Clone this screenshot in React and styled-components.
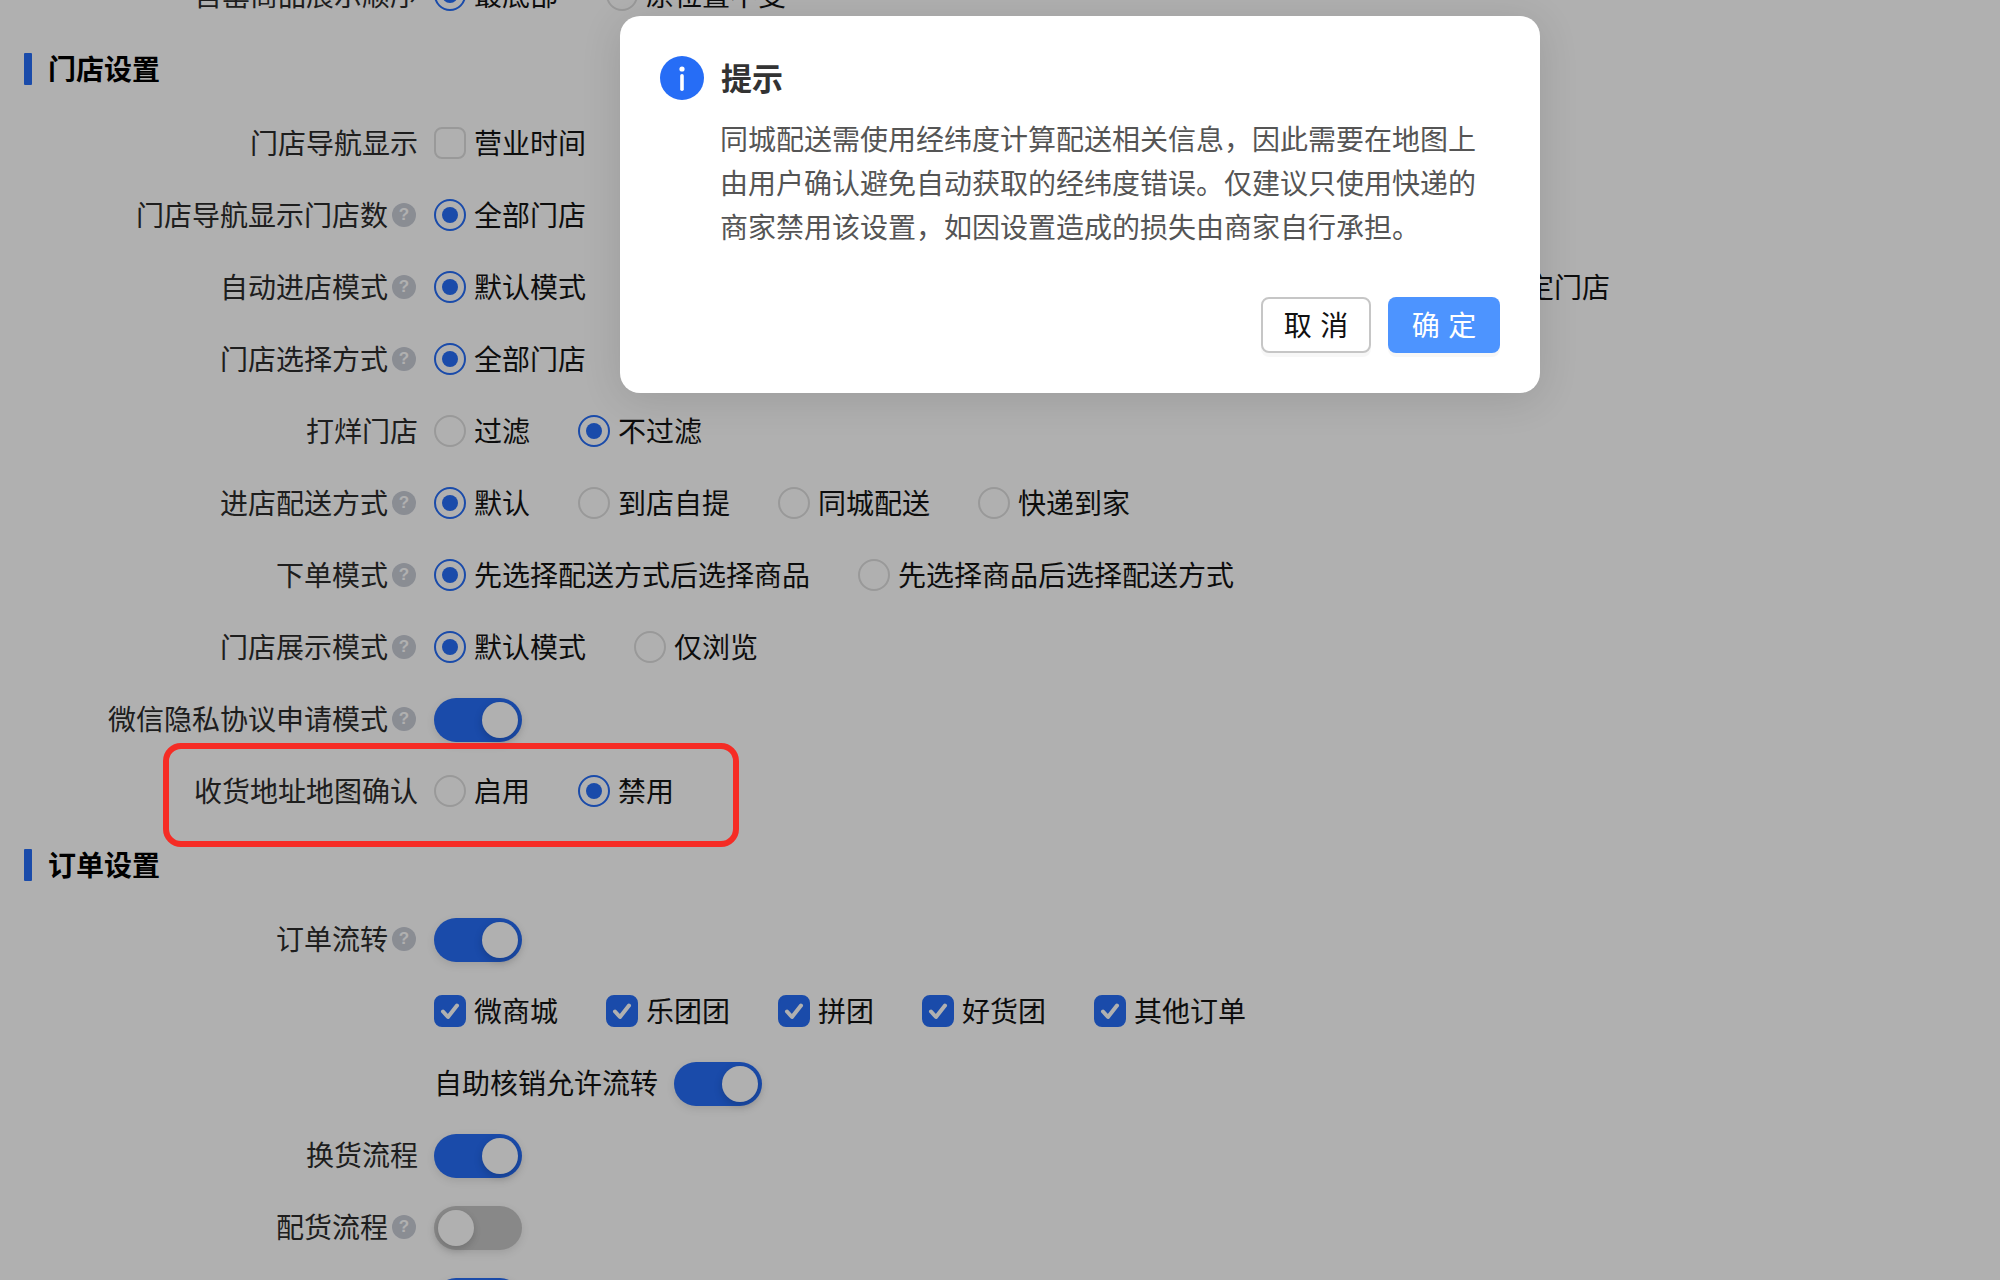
import React from 'react'
import styled, { createGlobalStyle } from 'styled-components'

const GlobalStyle = createGlobalStyle`
  html, body {
    margin: 0;
    padding: 0;
    background: #fff;
  }
  body {
    font-family: "Noto Sans CJK SC", "Noto Sans", sans-serif;
    font-size: 28px;
    color: #1a1a1a;
  }
  * {
    box-sizing: border-box;
  }
`

const BLUE = '#266df6'

const Shell = styled.div`
  position: relative;
  width: 2000px;
  height: 1280px;
  overflow: hidden;
  background: #fff;
`

// the settings page is scrolled, so the first row starts above the fold
const Page = styled.div`
  margin-top: -41px;
  display: flex;
  flex-direction: column;
`

const SectionTitle = styled.div`
  height: 76px;
  padding-left: 24px;
  display: flex;
  align-items: center;
  gap: 16px;
  font-size: 28px;
  font-weight: 700;
  line-height: 32px;
  color: #000;
  &::before {
    content: '';
    width: 8px;
    height: 32px;
    border-radius: 1px;
    background: ${BLUE};
  }
`

const TitleText = styled.span`
  padding-bottom: 2px;
`

const Row = styled.div`
  height: 72px;
  display: flex;
  align-items: center;
  gap: 16px;
`

const Label = styled.div`
  width: 418px;
  flex: none;
  display: flex;
  justify-content: flex-end;
  align-items: center;
  color: #2c2c2c;
  line-height: 40px;
  white-space: nowrap;
`

const Text = styled.span`
  padding-bottom: 2px;
`

const Help = styled.span`
  width: 24px;
  height: 24px;
  margin: 0 2px 0 4px;
  flex: none;
  border-radius: 50%;
  background: #c8ccd6;
  color: #fff;
  font-family: "Liberation Sans", sans-serif;
  font-size: 17px;
  font-weight: 700;
  line-height: 24px;
  text-align: center;
`

const Controls = styled.div`
  display: flex;
  align-items: center;
  gap: 48px;
  white-space: nowrap;
`

const Option = styled.label`
  display: flex;
  align-items: center;
  gap: 8px;
  line-height: 40px;
  color: #141414;
`

const RadioMark = styled.span`
  width: 32px;
  height: 32px;
  flex: none;
  border-radius: 50%;
  border: 2px solid ${props => props.$on ? BLUE : '#dedede'};
  display: flex;
  align-items: center;
  justify-content: center;
  &::after {
    content: '';
    width: 16px;
    height: 16px;
    border-radius: 50%;
    background: ${props => props.$on ? BLUE : 'transparent'};
  }
`

const CheckMark = styled.span`
  width: 32px;
  height: 32px;
  flex: none;
  border-radius: 8px;
  border: 2px solid ${props => props.$on ? BLUE : '#dedede'};
  background: ${props => props.$on ? BLUE : '#fff'};
  display: flex;
  align-items: center;
  justify-content: center;
`

const Track = styled.span`
  width: 88px;
  height: 44px;
  margin-top: 2px;
  flex: none;
  padding: 4px;
  border-radius: 22px;
  background: ${props => props.$on ? BLUE : '#c6c6c6'};
  box-shadow: 0 3px 8px rgba(0, 0, 0, 0.1);
  display: flex;
  justify-content: ${props => props.$on ? 'flex-end' : 'flex-start'};
`

const Knob = styled.span`
  width: 36px;
  height: 36px;
  border-radius: 50%;
  background: #fff;
  box-shadow: 0 3px 8px rgba(0, 0, 0, 0.18);
`

const InlineSwitch = styled.div`
  display: flex;
  align-items: center;
  gap: 16px;
  line-height: 40px;
  color: #141414;
`

const Overlay = styled.div`
  position: absolute;
  inset: 0;
  background: rgba(0, 0, 0, 0.31);
`

const Modal = styled.div`
  position: absolute;
  left: 620px;
  top: 16px;
  width: 920px;
  height: 377px;
  padding: 40px;
  border-radius: 20px;
  background: #fff;
  box-shadow: 0 6px 40px rgba(0, 0, 0, 0.12);
`

const ModalHead = styled.div`
  display: flex;
  align-items: center;
  gap: 17px;
  height: 44px;
`

const ModalTitle = styled.div`
  padding-bottom: 2px;
  font-size: 31px;
  font-weight: 700;
  line-height: 44px;
  color: #333;
`

const ModalBody = styled.p`
  margin: 16px 0 0;
  padding-left: 60px;
  font-size: 28px;
  line-height: 44px;
  color: #555;
`

const ModalFoot = styled.div`
  margin-top: 49px;
  display: flex;
  justify-content: flex-end;
  gap: 17px;
`

const Btn = styled.button`
  width: ${props => props.$primary ? '112px' : '110px'};
  height: 56px;
  padding: 0 0 2px;
  border-radius: 8px;
  border: ${props => props.$primary ? 'none' : '2px solid #c6c6c6'};
  background: ${props => props.$primary ? '#4d94ff' : '#fff'};
  color: ${props => props.$primary ? '#fff' : '#111'};
  box-shadow: 0 4px 0 rgba(0, 0, 0, 0.03);
  font-family: inherit;
  font-size: 28px;
  line-height: 1;
  word-spacing: 2px;
`

const Annotation = styled.div`
  position: absolute;
  left: 163px;
  top: 743px;
  width: 576px;
  height: 104px;
  border: 6px solid #f52c25;
  border-radius: 18px;
`

const Radios = ({ options, value }) => (
  <Controls>
    {options.map(o => (
      <Option key={o}>
        <RadioMark $on={o === value} />
        <Text>{o}</Text>
      </Option>
    ))}
  </Controls>
)

const Check = ({ on, children }) => (
  <Option>
    <CheckMark $on={on}>
      {on && (
        <svg width="24" height="24" viewBox="0 0 24 24" fill="none">
          <path d="M5 12.5l5 5.5 9-11.5" stroke="#fff" strokeWidth="4" strokeLinecap="round" strokeLinejoin="round" />
        </svg>
      )}
    </CheckMark>
    <Text>{children}</Text>
  </Option>
)

const Toggle = ({ on }) => (
  <Track $on={on}>
    <Knob />
  </Track>
)

const Field = ({ label, help, children }) => (
  <Row>
    <Label>
      <Text>{label}</Text>
      {help && <Help>?</Help>}
    </Label>
    {children}
  </Row>
)

export default function App() {
  return (
    <Shell>
      <GlobalStyle />
      <Page>
        <Field label="售罄商品展示顺序">
          <Radios options={['最底部', '原位置不变']} value="最底部" />
        </Field>

        <SectionTitle><TitleText>门店设置</TitleText></SectionTitle>
        <Field label="门店导航显示">
          <Controls>
            <Check>营业时间</Check>
          </Controls>
        </Field>
        <Field label="门店导航显示门店数" help>
          <Radios options={['全部门店']} value="全部门店" />
        </Field>
        <Field label="自动进店模式" help>
          <Radios
            options={['默认模式', '进入最近门店', '进入上次门店', '进入常用门店', '进入指定门店']}
            value="默认模式"
          />
        </Field>
        <Field label="门店选择方式" help>
          <Radios options={['全部门店']} value="全部门店" />
        </Field>
        <Field label="打烊门店">
          <Radios options={['过滤', '不过滤']} value="不过滤" />
        </Field>
        <Field label="进店配送方式" help>
          <Radios options={['默认', '到店自提', '同城配送', '快递到家']} value="默认" />
        </Field>
        <Field label="下单模式" help>
          <Radios options={['先选择配送方式后选择商品', '先选择商品后选择配送方式']} value="先选择配送方式后选择商品" />
        </Field>
        <Field label="门店展示模式" help>
          <Radios options={['默认模式', '仅浏览']} value="默认模式" />
        </Field>
        <Field label="微信隐私协议申请模式" help>
          <Toggle on />
        </Field>
        <Field label="收货地址地图确认">
          <Radios options={['启用', '禁用']} value="禁用" />
        </Field>

        <SectionTitle><TitleText>订单设置</TitleText></SectionTitle>
        <Field label="订单流转" help>
          <Toggle on />
        </Field>
        <Field>
          <Controls>
            <Check on>微商城</Check>
            <Check on>乐团团</Check>
            <Check on>拼团</Check>
            <Check on>好货团</Check>
            <Check on>其他订单</Check>
          </Controls>
        </Field>
        <Field>
          <InlineSwitch>
            <Text>自助核销允许流转</Text>
            <Toggle on />
          </InlineSwitch>
        </Field>
        <Field label="换货流程">
          <Toggle on />
        </Field>
        <Field label="配货流程" help>
          <Toggle />
        </Field>
        <Field label="退货流程">
          <Toggle on />
        </Field>
      </Page>

      <Overlay />

      <Modal>
        <ModalHead>
          <svg width="44" height="44" viewBox="0 0 44 44">
            <circle cx="22" cy="22" r="22" fill="#266df6" />
            <circle cx="22" cy="13" r="2.6" fill="#fff" />
            <rect x="20.2" y="18" width="3.6" height="17" rx="1.8" fill="#fff" />
          </svg>
          <ModalTitle>提示</ModalTitle>
        </ModalHead>
        <ModalBody>
          同城配送需使用经纬度计算配送相关信息，因此需要在地图上由用户确认避免自动获取的经纬度错误。仅建议只使用快递的商家禁用该设置，如因设置造成的损失由商家自行承担。
        </ModalBody>
        <ModalFoot>
          <Btn>取 消</Btn>
          <Btn $primary>确 定</Btn>
        </ModalFoot>
      </Modal>

      <Annotation />
    </Shell>
  )
}
